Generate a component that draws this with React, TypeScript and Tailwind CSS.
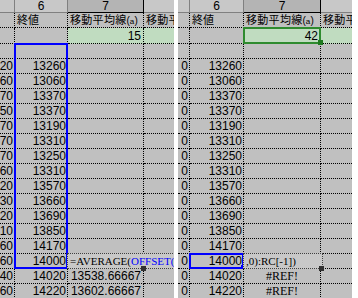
import React from "react";

const vals = ["13260","13060","13370","13370","13190","13310","13250","13310","13570","13660","13690","13850","14170","14000","14020","14220"];
const leftC5 = ["20","60","70","50","70","70","70","60","20","30","20","10","60","60","40","60"];

const font = "font-['Liberation_Sans','Noto_Sans_CJK_JP',sans-serif]";

type Side = "left" | "right";

function Cell({ w, h, children, className = "", last = false }: { w: string; h: string; children?: React.ReactNode; className?: string; last?: boolean }) {
  return (
    <div className={`${w} ${h} shrink-0 flex items-center overflow-hidden whitespace-nowrap border-b border-dotted border-black ${last ? "" : "border-r"} ${className}`}>
      {children}
    </div>
  );
}

function Title({ s }: { s: string }) {
  return (
    <span className="text-[11px] tracking-[0.3px] leading-none">
      移動平均線<span className="text-[10px] tracking-normal">(</span><span className="text-[8px]">{s}</span><span className="text-[10px]">)</span>
    </span>
  );
}

function Panel({ side }: { side: Side }) {
  const L = side === "left";
  const w5 = L ? "w-[15px]" : "w-[12px]";
  const w6 = L ? "w-[53px]" : "w-[54px]";
  const w7 = L ? "w-[76px]" : "w-[77px]";
  const w8 = L ? "w-[30px]" : "w-[31px]";
  return (
    <div className={`relative w-[174px] h-[298px] overflow-hidden bg-[#c0c0c0] text-[12px] text-black ${font}`}>
      {/* header */}
      <div className="flex h-[13px]">
        <div className={`${w5} h-[13px] shrink-0 bg-[#c8c8c8] border-r border-b border-[#808080]`} />
        <div className={`${w6} h-[13px] shrink-0 bg-[#c8c8c8] border-r border-b border-[#808080] flex items-center justify-center leading-none`}>6</div>
        <div className={`${w7} h-[13px] shrink-0 bg-[#b4b4b4] border-r border-b border-black flex items-center justify-center leading-none`}>7</div>
        <div className={`${w8} h-[13px] shrink-0 bg-[#c8c8c8] border-b border-[#808080]`} />
      </div>
      {/* title row */}
      <div className="flex">
        <Cell w={w5} h="h-[15px]" />
        <Cell w={w6} h="h-[15px]" className="pl-[2px] text-[11px]">終値</Cell>
        <Cell w={w7} h="h-[15px]" className="pl-[2px]"><Title s="a" /></Cell>
        <Cell w={w8} h="h-[15px]" className="pl-[2px]" last><Title s="b" /></Cell>
      </div>
      {/* param row */}
      <div className="flex">
        <Cell w={w5} h="h-[16px]" />
        <Cell w={w6} h="h-[16px]" />
        <Cell w={w7} h="h-[16px]" className="justify-end pr-[2px] bg-[#c0dcc0]">{L ? "15" : "42"}</Cell>
        <Cell w={w8} h="h-[16px]" className="bg-[#c0dcc0]" last />
      </div>
      {/* empty row */}
      <div className="flex">
        <Cell w={w5} h="h-[15px]" />
        <Cell w={w6} h="h-[15px]" />
        <Cell w={w7} h="h-[15px]" />
        <Cell w={w8} h="h-[15px]" last />
      </div>
      {vals.map((v, i) => {
        let c7: React.ReactNode = null;
        let c7cls = "";
        if (i === 14) {
          c7 = L ? "13538.66667" : "#REF!";
          c7cls = L ? "justify-end pr-[2px]" : "justify-center";
        } else if (i === 15) {
          c7 = L ? "13602.66667" : "#REF!";
          c7cls = L ? "justify-end pr-[2px]" : "justify-center";
        }
        return (
          <div className="flex" key={i}>
            <Cell w={w5} h="h-[15px]" className="justify-end pr-[1px]">{L ? leftC5[i] : "0"}</Cell>
            <Cell w={w6} h="h-[15px]" className="justify-end pr-[1px]">{v}</Cell>
            <Cell w={w7} h="h-[15px]" className={`${c7cls} ${L ? "" : "font-['Liberation_Serif',serif]"}`}>{c7}</Cell>
            <Cell w={w8} h="h-[15px]" last />
          </div>
        );
      })}

      {L ? (
        <>
          {/* range finder */}
          <div className="absolute left-[14px] top-[43px] w-[54px] h-[226px] border-2 border-[#0000ff]" />
          {/* edit box */}
          <div className="absolute left-[67px] top-[253px] w-[120px] h-[16px] bg-[#c8c8c8] border border-dotted border-[#404040] flex items-center pl-[2px] whitespace-nowrap font-['Liberation_Serif',serif] text-[11px]">
            <span>=AVERAGE(</span><span className="text-[#0000ff]">OFFSET(</span>
          </div>
          <div className="absolute left-[141px] top-[266px] w-[5px] h-[5px] bg-[#303030]" />
        </>
      ) : (
        <>
          {/* green selected cell */}
          <div className="absolute top-[27px] w-[78px] h-[17px] border-2 border-[#2e8b2e]" style={{ left: 243 - 178 }} />
          <div className="absolute top-[40px] w-[5px] h-[5px] bg-[#1e7a1e]" style={{ left: 318 - 178 }} />
          {/* range finder */}
          <div className="absolute top-[253px] w-[55px] h-[16px] border-2 border-[#0000ff]" style={{ left: 189 - 178 }} />
          <div className="absolute top-[265px] w-[3px] h-[4px] bg-[#0000ff]" style={{ left: 241 - 178 }} />
          {/* edit box */}
          <div className="absolute top-[253px] w-[80px] h-[16px] bg-[#c8c8c8] border border-dotted border-[#404040] flex items-center pl-[2px] whitespace-nowrap font-['Liberation_Serif',serif] text-[11px]" style={{ left: 243 - 178 }}>
            ,0):RC[-1])
          </div>
          <div className="absolute top-[266px] w-[5px] h-[5px] bg-[#303030]" style={{ left: 319 - 178 }} />
        </>
      )}
    </div>
  );
}

export default function App() {
  return (
    <div className="w-[358px] h-[298px] bg-white flex gap-[4px] overflow-hidden">
      <Panel side="left" />
      <Panel side="right" />
    </div>
  );
}
